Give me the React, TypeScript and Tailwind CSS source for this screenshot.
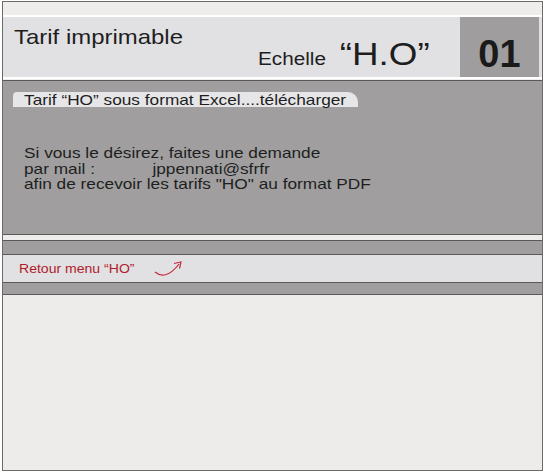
import React from "react";

export default function App() {
  const font = { fontFamily: '"Liberation Sans", Arial, sans-serif' };
  return (
    <div className="w-[545px] h-[472px] bg-white pt-[1px] pl-[2px] overflow-hidden" style={font}>
      <div className="w-[541px] h-[470px] border border-[#6a6a6a] bg-[#edecea] flex flex-col">
        <div className="h-[13px] bg-[#eeedeb]" />
        <div className="h-[2px] bg-white" />
        <div className="h-[60px] bg-[#e1e1e3] flex">
          <div className="flex-1 relative">
            <div className="absolute left-[11px] top-[9px] text-[21px] text-[#1e1e1e] leading-none scale-x-[1.14] origin-left whitespace-nowrap">
              Tarif imprimable
            </div>
            <div className="absolute left-[255px] top-[21px] flex items-baseline text-[#1e1e1e] leading-none scale-x-[1.15] origin-left whitespace-nowrap">
              <span className="text-[18px]">Echelle</span>
              <span className="text-[32px] ml-[12px]">“H.O”</span>
            </div>
          </div>
          <div className="w-[79px] mr-[3px] bg-[#9f9d9e] flex items-end justify-center pb-[4px]">
            <span className="text-[38px] font-bold text-[#1a1a1a] leading-none">01</span>
          </div>
        </div>
        <div className="h-[2px] bg-white" />
        <div className="h-[1px] bg-[#eeedeb]" />
        <div className="h-[155px] border-t border-b border-[#5a5a5a] bg-[#a09e9f] pt-[11px]">
          <div className="ml-[10px] w-[345px] h-[15px] bg-[#e6e6e8] rounded-tr-[10px] rounded-tl-[4px] pl-[11px]">
            <div className="w-fit text-[15px] leading-[15px] text-[#1e1e1e] scale-x-[1.15] origin-left whitespace-nowrap">
              Tarif “HO” sous format Excel....télécharger
            </div>
          </div>
          <div className="w-fit mt-[38px] ml-[21px] text-[15px] leading-[15.5px] text-[#1e1e1e] scale-x-[1.15] origin-left whitespace-nowrap">
            <div>Si vous le désirez, faites une demande</div>
            <div>
              par mail :<span className="ml-[50px]">jppennati@sfrfr</span>
            </div>
            <div>afin de recevoir les tarifs "HO" au format PDF</div>
          </div>
        </div>
        <div className="h-[5px] bg-[#eeedeb]" />
        <div className="h-[15px] border-t border-b border-[#5a5a5a] bg-[#a09e9f]" />
        <div className="h-[27px] bg-[#e1e1e3] flex items-center pl-[16px]">
          <span className="w-[128px] text-[12px] text-[#b01c2a] scale-x-[1.17] origin-left whitespace-nowrap">
            Retour menu “HO”
          </span>
          <svg width="32" height="20" viewBox="0 0 32 20" className="ml-[6px]">
            <path d="M2 13 C 8 18, 16 18, 26 5" fill="none" stroke="#c8283a" strokeWidth="1.2" />
            <path d="M21 4.5 L 28 3 L 26.5 9.5" fill="none" stroke="#c8283a" strokeWidth="1.2" />
          </svg>
        </div>
        <div className="h-[13px] border-t border-b border-[#5a5a5a] bg-[#a09e9f]" />
        <div className="flex-1 bg-[#edecea]" />
      </div>
    </div>
  );
}
